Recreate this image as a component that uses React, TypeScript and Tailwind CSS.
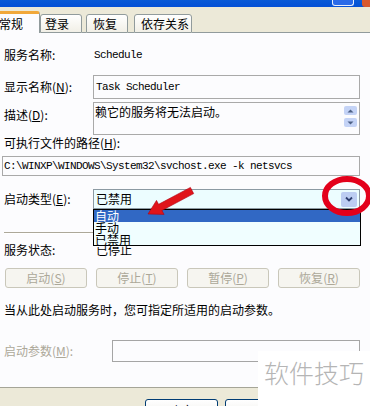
import React from "react";

const cjk = "font-['Noto_Sans_CJK_SC',sans-serif]";
const mono = "font-['Liberation_Mono','Noto_Sans_CJK_SC',monospace] text-[11px] tracking-[-0.6px]";

function Tab({ label, active, width, pad }: { label: string; active?: boolean; width: string; pad: string }) {
  if (active) {
    return (
      <div
        className={`${width} h-[22px] -ml-[1px] flex items-center bg-[#fcfcfe] border-t-[3px] border-t-[#f1a83a] border-r border-r-[#919b9c] rounded-tr-[3px] relative z-10`}
      >
        <span className="text-[12px] leading-[14px] text-black">{label}</span>
      </div>
    );
  }
  return (
    <div
      className={`${width} ${pad} h-[19px] flex items-center border border-[#919b9c] rounded-t-[3px] bg-gradient-to-b from-[#ffffff] to-[#f1efe6] border-b-[#919b9c]`}
    >
      <span className="text-[12px] leading-[14px] text-black">{label}</span>
    </div>
  );
}

function GrayButton({ label, hot }: { label: string; hot: string }) {
  return (
    <div className="w-[82px] h-[20px] flex items-center justify-center border border-[#c9c7ba] rounded-[3px] bg-[#f6f5f0] text-[12px] leading-[14px] text-[#aca899]">
      {label}(<span className="underline">{hot}</span>)
    </div>
  );
}

export default function App() {
  return (
    <div className={`w-[370px] h-[406px] overflow-hidden relative bg-[#ece9d8] flex flex-col ${cjk}`}>
      {/* title bar */}
      <div className="h-[7px] shrink-0 bg-gradient-to-b from-[#0a5ad6] to-[#0450d6] flex justify-end items-start">
        <div className="w-[22px] h-[6px] mr-[8px] border border-[#e8eefc] border-t-0 rounded-b-[3px] bg-[#2a6ae8]" />
        <div className="w-[8px] h-[7px] bg-[#d9582e] rounded-bl-[3px]" />
      </div>

      {/* tabs */}
      <div className="h-[26px] shrink-0 flex items-end">
        <Tab label="常规" active width="w-[41px]" pad="" />
        <Tab label="登录" width="w-[42px]" pad="pl-[4px]" />
        <div className="w-[4px] h-[1px] bg-[#919b9c]" />
        <Tab label="恢复" width="w-[42px]" pad="pl-[6px]" />
        <div className="w-[6px] h-[1px] bg-[#919b9c]" />
        <Tab label="依存关系" width="w-[58px]" pad="pl-[6px]" />
        <div className="flex-1 h-[1px] bg-[#919b9c]" />
      </div>

      {/* panel */}
      <div className="h-[355px] shrink-0 flex flex-col bg-[#fcfcfe] border-b border-[#a5a597] pl-[4px] pr-[10px] text-[12px] leading-[16px] text-black">
        <div className="mt-[12px] h-[20px] flex items-center">
          <div className="w-[89px]">服务名称:</div>
          <div className={`${mono} pl-[1px]`}>Schedule</div>
        </div>

        <div className="mt-[10px] h-[24px] flex">
          <div className="w-[89px] flex items-center">
            显示名称(<span className="underline">N</span>):
          </div>
          <div className="flex-1 border border-[#a9a9a9] pl-[2px] pt-[1px]">
            <span className={mono}>Task Scheduler</span>
          </div>
        </div>

        <div className="mt-[3px] h-[33px] flex">
          <div className="w-[89px] pt-[5px]">
            描述(<span className="underline">D</span>):
          </div>
          <div className="flex-1 border border-[#a9a9a9] flex">
            <div className="flex-1 pl-[1px] pt-[1px]">赖它的服务将无法启动。</div>
            <div className="w-[15px] flex flex-col gap-[3px] pt-[3px] pr-[2px]">
              <div className="h-[9px] rounded-[2px] bg-[#c4d3f6] flex items-center justify-center">
                <svg width="7" height="4" viewBox="0 0 7 4"><path d="M0.5 3.5 L3.5 0.5 L6.5 3.5 Z" fill="#4d6185" /></svg>
              </div>
              <div className="h-[9px] rounded-[2px] bg-[#c4d3f6] flex items-center justify-center">
                <svg width="7" height="4" viewBox="0 0 7 4"><path d="M0.5 0.5 L3.5 3.5 L6.5 0.5 Z" fill="#4d6185" /></svg>
              </div>
            </div>
          </div>
        </div>

        <div className="h-[16px] flex items-center">
          可执行文件的路径(<span className="underline">H</span>):
        </div>

        <div className="mt-[5px] -ml-[2px] h-[20px] border border-[#a9a9a9] flex items-center pl-[1px]">
          <span className={mono}>C:\WINXP\WINDOWS\System32\svchost.exe -k netsvcs</span>
        </div>

        <div className="mt-[13px] h-[20px] flex">
          <div className="w-[89px] flex items-center">
            启动类型(<span className="underline">E</span>):
          </div>
          <div className="flex-1 border border-[#8c9aa3] bg-[#ecfdff] flex items-center pl-[2px] pr-[2px]">
            <div className="flex-1">已禁用</div>
            <div className="w-[16px] h-[15px] rounded-[2px] bg-[#bccdf2] flex items-center justify-center">
              <svg width="8" height="6" viewBox="0 0 8 6">
                <path d="M1 1.5 L4 4.5 L7 1.5" stroke="#2e3f70" strokeWidth="1.8" fill="none" />
              </svg>
            </div>
          </div>
        </div>

        <div className="mt-[23px] h-[2px] border-t border-[#aca899] border-b border-b-white" />

        <div className="mt-[8px] h-[16px] flex items-center">
          <div className="w-[92px]">服务状态:</div>
          <div>已停止</div>
        </div>

        <div className="mt-[10px] ml-[1px] flex gap-[9px]">
          <GrayButton label="启动" hot="S" />
          <GrayButton label="停止" hot="T" />
          <GrayButton label="暂停" hot="P" />
          <GrayButton label="恢复" hot="R" />
        </div>

        <div className="mt-[14px] h-[16px] flex items-center">当从此处启动服务时，您可指定所适用的启动参数。</div>

        <div className="mt-[22px] h-[22px] flex">
          <div className="w-[108px] flex items-center text-[#aca899]">
            启动参数(<span className="underline">M</span>):
          </div>
          <div className="flex-1 border border-[#a5a5a5] bg-[#fcfcfe]" />
        </div>
      </div>

      {/* bottom buttons */}
      <div className="flex-1 flex pl-[145px] gap-[7px] pt-[11px]">
        <div className="w-[73px] h-[23px] shrink-0 border border-[#003c74] rounded-[3px] bg-gradient-to-b from-white to-[#ecebe6] flex items-center justify-center text-[12px] leading-[14px] text-black">
          确定
        </div>
        <div className="w-[73px] h-[23px] shrink-0 border border-[#003c74] rounded-[3px] bg-gradient-to-b from-white to-[#ecebe6] flex items-center justify-center text-[12px] leading-[14px] text-black">
          取消
        </div>
      </div>

      {/* open dropdown list */}
      <div className="absolute left-[93px] top-[209px] w-[268px] h-[37px] border border-black bg-[#f0feff] text-[12px] leading-[12px] flex flex-col">
        <div className="h-[12px] bg-[#3168c4] text-white pl-[1px]">自动</div>
        <div className="h-[12px] text-black pl-[1px]">手动</div>
        <div className="h-[11px] text-black pl-[1px]">已禁用</div>
      </div>

      {/* red annotations */}
      <svg className="absolute left-0 top-0 pointer-events-none" width="370" height="406" viewBox="0 0 370 406">
        <polygon
          points="148,214 164.1,214.4 161.9,210.5 193.7,193.6 190.4,187.4 158.6,204.3 156.5,200.4"
          fill="#e0141a"
          stroke="#b00010"
          strokeWidth="0.6"
        />
        <ellipse cx="347" cy="196" rx="22" ry="17" fill="none" stroke="#e3001b" strokeWidth="6" />
      </svg>

      {/* watermark */}
      <div className="absolute left-[258px] top-[351px] w-[112px] h-[55px] bg-white pt-[5px] pl-[6px]">
        <span className="text-[25px] leading-[32px] font-light text-[#b5b5b5] tracking-[0px]">软件技巧</span>
      </div>
    </div>
  );
}
